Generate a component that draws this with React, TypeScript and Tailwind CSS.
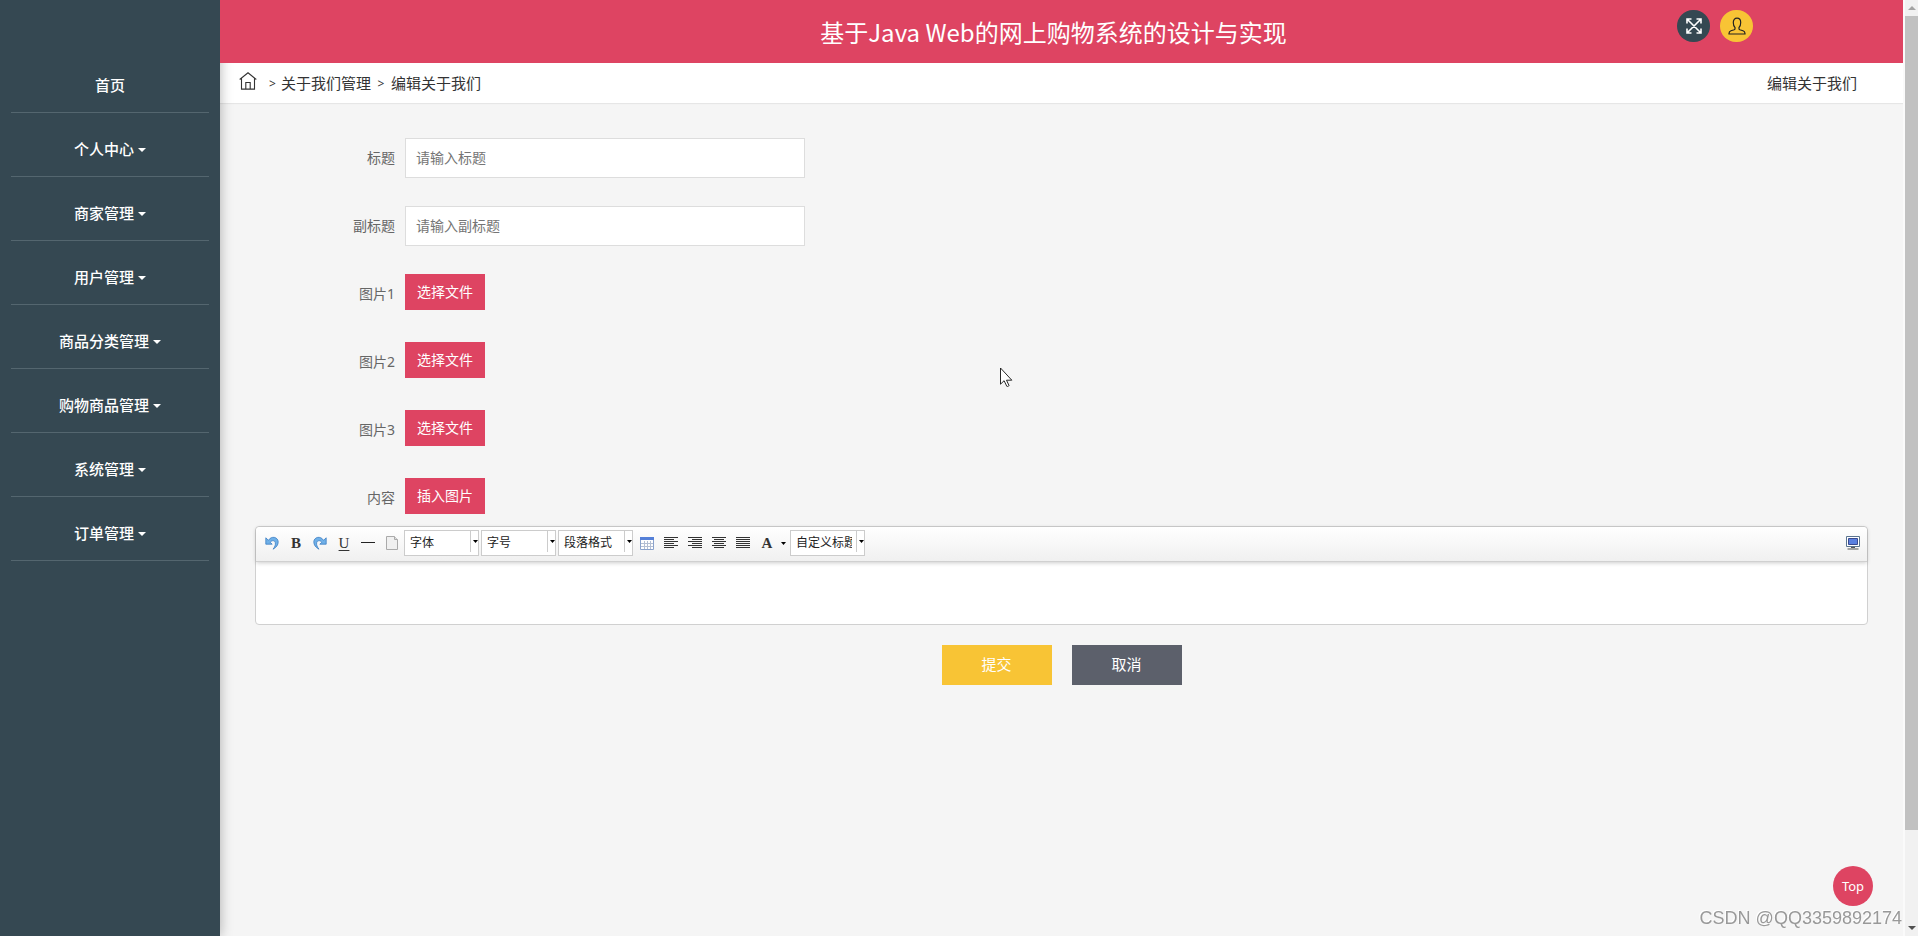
import React from "react";

const menus = [
  { name: "首页", caret: false },
  { name: "个人中心", caret: true },
  { name: "商家管理", caret: true },
  { name: "用户管理", caret: true },
  { name: "商品分类管理", caret: true },
  { name: "购物商品管理", caret: true },
  { name: "系统管理", caret: true },
  { name: "订单管理", caret: true },
];

const textFields = [
  { id: "title", label: "标题", placeholder: "请输入标题" },
  { id: "subtitle", label: "副标题", placeholder: "请输入副标题" },
];

const fileFields = [
  { id: "picture1", label: "图片1", button: "选择文件" },
  { id: "picture2", label: "图片2", button: "选择文件" },
  { id: "picture3", label: "图片3", button: "选择文件" },
];

const Caret = ({ className = "" }: { className?: string }) => (
  <svg viewBox="0 0 8 4" className={`h-1 w-2 fill-current ${className}`}>
    <path d="M0 0h8L4 4z" />
  </svg>
);

const Sidebar = () => {
  return (
    <aside className="relative z-10 w-[220px] shrink-0 bg-[#354852] px-[11px] pt-[49px] shadow-[0_0_12px_rgba(0,0,0,0.3)]">
      <nav>
        {menus.map((menu) => (
          <a
            key={menu.name}
            href="#"
            className="flex h-16 items-center justify-center gap-1 border-b border-[#54666f] pt-2.5 text-[15px] font-medium text-white">
            {menu.name}
            {menu.caret && <Caret />}
          </a>
        ))}
      </nav>
    </aside>
  );
};

const Header = () => {
  return (
    <header className="relative z-20 grid h-[63px] grid-cols-[1fr_auto_1fr] bg-[#de4462] pr-4">
      <h1 className="col-start-2 pt-4 font-['Noto_Sans_CJK_SC',sans-serif] text-2xl leading-8 text-white">
        基于Java Web的网上购物系统的设计与实现
      </h1>
      <div className="flex justify-end gap-2.5 pt-2.5 pr-[134px]">
        <button
          aria-label="全屏"
          className="flex h-8 w-[33px] items-center justify-center rounded-full bg-[#354852] text-white">
          <svg viewBox="0 0 16 16" className="size-4" fill="none" stroke="currentColor" strokeWidth="1.6">
            <path d="M1 5.500V1h4.500M10.500 1H15v4.500M15 10.500V15h-4.500M5.500 15H1v-4.500M1 1l14 14M15 1L1 15" />
          </svg>
        </button>
        <button
          aria-label="个人中心"
          className="flex h-8 w-[33px] items-center justify-center rounded-full bg-[#f8c435] text-[#222]">
          <svg viewBox="0 0 18 18" className="size-[18px]" fill="none" stroke="currentColor" strokeWidth="1.2">
            <path d="M7 10.500C5.800 9.500 5.300 7.800 5.300 5.500C5.300 2.800 6.700 1.200 9 1.200s3.700 1.600 3.700 4.300c0 2.300-.5 4-1.700 5v1.200c0 .5.300.8.800 1l3.200 1.100c1.300.5 2 1.400 2 2.800v.4H1v-.4c0-1.400.7-2.300 2-2.800l3.200-1.100c.5-.2.800-.5.800-1z" />
          </svg>
        </button>
      </div>
    </header>
  );
};

const Breadcrumb = () => {
  return (
    <div className="flex h-10 items-center justify-between bg-white pr-[46px] pl-[19px] text-[15px] text-[#333] shadow-[0_1px_1px_rgba(0,0,0,0.06)]">
      <div className="flex items-center">
        <a href="#" aria-label="首页" className="mr-3 pb-1">
          <svg viewBox="0 0 18 18" className="size-[18px]" fill="none" stroke="currentColor" strokeWidth="1.1">
            <path d="M.7 7.500L9 .8l8.300 6.700M2.500 6.200v10.900h13V6.200M6.800 17v-6.500h4.400V17" />
          </svg>
        </a>
        <span className="w-3 pt-0.5 text-xs">&gt;</span>
        <a href="#">关于我们管理</a>
        <span className="w-5 pt-0.5 text-center text-xs">&gt;</span>
        <span>编辑关于我们</span>
      </div>
      <span>编辑关于我们</span>
    </div>
  );
};

const ToolButton = ({ label, children }: { label: string; children: React.ReactNode }) => (
  <button
    type="button"
    aria-label={label}
    className="flex h-6 w-6 items-center justify-center font-['Liberation_Serif',serif] text-[15px] text-[#333]">
    {children}
  </button>
);

const ToolSelect = ({ name }: { name: string }) => (
  <div className="relative mr-0.5 w-[75px]">
    <select
      aria-label={name}
      className="block h-[26px] w-full appearance-none border border-[#ccc] bg-white pr-3 pl-[5px] text-xs text-[#222]">
      <option>{name}</option>
    </select>
    <div className="pointer-events-none absolute inset-y-0 right-0 mt-px mb-1 flex w-[9px] items-center justify-center border-l border-[#ccc]">
      <svg viewBox="0 0 5 3" className="h-[3px] w-[5px]">
        <path d="M0 0h5L2.500 3z" />
      </svg>
    </div>
  </div>
);

const UndoIcon = ({ flip = false }: { flip?: boolean }) => (
  <svg viewBox="0 0 14 14" className={flip ? "size-3.5 -scale-x-100" : "size-3.5"}>
    <path
      d="M.8 1.800L.8 8.200L7.200 8.200L5.200 6.200C6.500 4.300 9.600 4 10.300 6.600C10.800 8.800 9.800 11 8 13.200C11.200 11.600 13.400 8.800 13.200 5.600C12.800 1 6.500-.6 3.400 4.300z"
      fill="#6fb0e8"
      stroke="#3d7fc4"
      strokeWidth=".8"
    />
  </svg>
);

// the four text alignment icons differ only in the short lines
const AlignIcon = ({ d }: { d: string }) => (
  <svg viewBox="0 0 14 12" className="h-3 w-3.5" stroke="#333" strokeWidth="1">
    <path d={"M0 .5h14M0 4.500h14M0 8.500h14" + d} />
  </svg>
);

const Editor = () => {
  return (
    <div className="rounded border border-[#d0d0d0] bg-white">
      <div className="flex h-[35px] items-center rounded-t border-b border-[#d0d0d0] bg-linear-to-b from-white to-[#f0f0f0] pr-0.5 pb-0.5 pl-1 shadow-[0_1px_4px_rgba(0,0,0,0.2)]">
        <div className="flex flex-1 items-center">
          <ToolButton label="撤销">
            <UndoIcon />
          </ToolButton>
          <ToolButton label="加粗">
            <b>B</b>
          </ToolButton>
          <ToolButton label="重做">
            <UndoIcon flip />
          </ToolButton>
          <ToolButton label="下划线">
            <span className="underline underline-offset-2">U</span>
          </ToolButton>
          <ToolButton label="分隔线">
            <svg viewBox="0 0 14 14" className="size-3.5">
              <path d="M0 6h14v1H0z" fill="#222" />
            </svg>
          </ToolButton>
          <ToolButton label="清空文档">
            <svg viewBox="0 0 14 14" className="size-3.5" fill="#f0f0f0" stroke="#aaa">
              <path d="M1.500.5h8l3 3v10h-11z" />
              <path d="M9.500.5v3h3" fill="#ddd" />
            </svg>
          </ToolButton>
          <ToolSelect name="字体" />
          <ToolSelect name="字号" />
          <ToolSelect name="段落格式" />
          <ToolButton label="表格">
            <svg viewBox="0 0 14 13" className="h-[13px] w-3.5">
              <path d="M.5.5h13v12H.5z" fill="#fff" stroke="#8aa2cc" />
              <path d="M1 6.500h12M1 9.500h12M4.500 4v8M7.500 4v8M10.500 4v8" stroke="#b4bfd3" />
              <path d="M0 0h14v3H0z" fill="#5580d8" />
            </svg>
          </ToolButton>
          <ToolButton label="左对齐">
            <AlignIcon d="M0 2.500h10M0 6.500h10M0 10.500h10" />
          </ToolButton>
          <ToolButton label="右对齐">
            <AlignIcon d="M4 2.500h10M4 6.500h10M4 10.500h10" />
          </ToolButton>
          <ToolButton label="居中对齐">
            <AlignIcon d="M2 2.500h10M2 6.500h10M2 10.500h10" />
          </ToolButton>
          <ToolButton label="两端对齐">
            <AlignIcon d="M0 2.500h14M0 6.500h14M0 10.500h14" />
          </ToolButton>
          <ToolButton label="字体颜色">
            <b>A</b>
          </ToolButton>
          <button type="button" aria-label="选择颜色" className="mr-[3px] flex h-6 w-2 items-center justify-center">
            <svg viewBox="0 0 5 3" className="h-[3px] w-[5px]">
              <path d="M0 0h5L2.500 3z" />
            </svg>
          </button>
          <ToolSelect name="自定义标题" />
        </div>
        <ToolButton label="全屏编辑">
          <svg viewBox="0 0 14 14" className="size-3.5">
            <path d="M.5.5h13v10H.5z" fill="#fff" stroke="#5b7590" />
            <path d="M2.500 2.500h9v6h-9z" fill="#5a80e0" stroke="#3a4a90" />
            <path d="M5 11h4v1H5zM1.500 12.500h11v1h-11z" fill="#555" />
          </svg>
        </ToolButton>
      </div>
      <textarea aria-label="内容编辑" className="block h-[62px] w-full resize-none px-2 py-1 text-base outline-none" />
    </div>
  );
};

const fieldLabel = "w-[140px] shrink-0 text-right text-sm leading-10 text-[#666]";
const pinkButton = "h-9 w-20 bg-[#de4462] text-sm text-white";

const AboutForm = () => {
  return (
    <form className="px-[35px] pt-[35px]">
      <div className="flex flex-col gap-7">
        {textFields.map((field) => (
          <div key={field.id} className="flex items-start gap-2.5">
            <label htmlFor={field.id} className={fieldLabel}>
              {field.label}
            </label>
            <input
              id={field.id}
              type="text"
              placeholder={field.placeholder}
              className="h-10 w-[400px] border border-[#ddd] bg-white px-2.5 pb-0.5 text-sm placeholder:text-[#757575]"
            />
          </div>
        ))}
        {fileFields.map((field) => (
          <div key={field.id} className="flex items-start gap-2.5">
            <label htmlFor={field.id} className={fieldLabel}>
              {field.label}
            </label>
            <button id={field.id} type="button" className={pinkButton}>
              {field.button}
            </button>
          </div>
        ))}
        <div className="flex items-start gap-2.5">
          <label htmlFor="content" className={fieldLabel}>
            内容
          </label>
          <button id="content" type="button" className={pinkButton}>
            插入图片
          </button>
        </div>
      </div>
      <div className="mt-2">
        <Editor />
      </div>
      <div className="mt-5 flex justify-center gap-5">
        <button type="button" className="h-10 w-[110px] bg-[#f8c435] pb-0.5 text-[15px] text-white">
          提交
        </button>
        <button type="button" className="h-10 w-[110px] bg-[#5c606b] pb-0.5 text-[15px] text-white">
          取消
        </button>
      </div>
    </form>
  );
};

const Scrollbar = () => {
  return (
    <div className="flex w-[15px] shrink-0 flex-col border-l-2 border-[#fafafa] bg-[#f1f1f1]">
      <div className="flex h-4 items-center justify-center text-[#a3a3a3]">
        <Caret className="rotate-180" />
      </div>
      <div className="flex-1">
        <div className="h-[90%] bg-[#c1c1c1]" />
      </div>
      <div className="flex h-4 items-center justify-center text-[#505050]">
        <Caret />
      </div>
    </div>
  );
};

const App = () => {
  return (
    <div className="relative flex h-screen bg-[#f5f5f5] font-['Noto_Sans','Noto_Sans_CJK_SC',sans-serif]">
      <Sidebar />
      <main className="min-w-0 flex-1">
        <Header />
        <Breadcrumb />
        <AboutForm />
      </main>
      <Scrollbar />

      <button className="fixed right-[45px] bottom-[30px] size-10 rounded-full bg-[#de4462] pt-0.5 text-[13px] text-white">
        Top
      </button>
      <span className="fixed right-4 bottom-1.5 z-30 font-['Liberation_Sans',sans-serif] text-lg leading-6 text-[#999] [text-shadow:-1px_-1px_0_#fff]">
        CSDN @QQ3359892174
      </span>
      <svg viewBox="0 0 13 20" className="absolute top-[367px] left-[1000px] h-5 w-[13px]">
        <path
          d="M.5 1v16.200l3.600-3.500 2.700 5.600c1 .4 2-.1 2.200-.8l-2.500-5.300h5.300z"
          fill="#fff"
          stroke="#111"
          strokeWidth=".9"
        />
      </svg>
    </div>
  );
};

export default App;
